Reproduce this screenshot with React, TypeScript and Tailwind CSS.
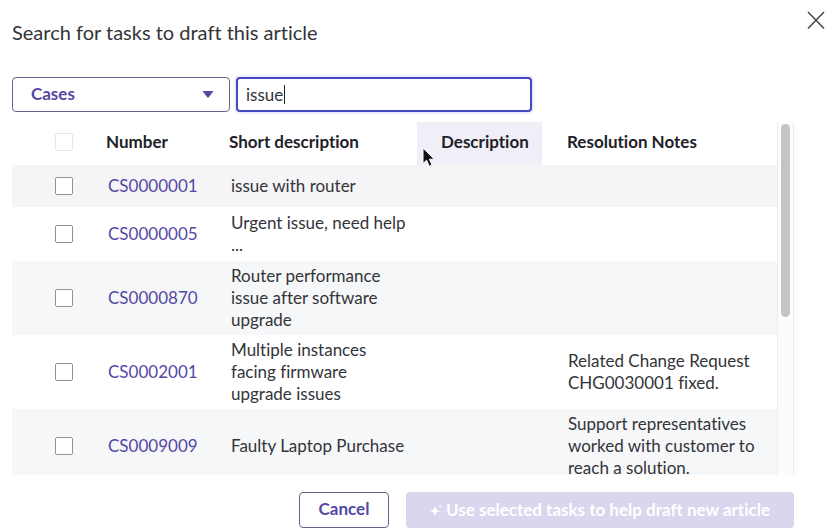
import { useState } from "react";

type Task = {
  id: string;
  summary: string;
  notes: string;
  row: string;
};

const tasks: Task[] = [
  { id: "CS0000001", summary: "issue with router", notes: "", row: "h-[42px] bg-[#f5f5f8]" },
  { id: "CS0000005", summary: "Urgent issue, need help ...", notes: "", row: "h-[54px] bg-white" },
  { id: "CS0000870", summary: "Router performance issue after software upgrade", notes: "", row: "h-[74px] bg-[#f6f7f8]" },
  {
    id: "CS0002001",
    summary: "Multiple instances facing firmware upgrade issues",
    notes: "Related Change Request CHG0030001 fixed.",
    row: "h-[74px] bg-white",
  },
  {
    id: "CS0009009",
    summary: "Faulty Laptop Purchase",
    notes: "Support representatives worked with customer to reach a solution.",
    row: "h-[74px] bg-[#f6f7f8]",
  },
];

function CheckBox({ label, muted = false }: { label: string; muted?: boolean }) {
  return (
    <input
      type="checkbox"
      aria-label={label}
      className={
        "mx-auto block size-[18px] appearance-none rounded-xs border bg-white checked:bg-[#4f46a8] " +
        (muted ? "border-[#e4e4e6]" : "border-[#929292]")
      }
    />
  );
}

function Sparkle() {
  return (
    <svg viewBox="0 0 12 14" className="h-3.5 w-3 shrink-0" fill="currentColor" aria-hidden="true">
      <path d="M5 3 L6.5 6.5 L10 8 L6.5 9.5 L5 13 L3.5 9.5 L0 8 L3.5 6.5 Z" />
      <path d="M10 1.8 L10.5 3.1 L11.8 3.6 L10.5 4.1 L10 5.4 L9.5 4.1 L8.2 3.6 L9.5 3.1 Z" />
    </svg>
  );
}

export default function App() {
  const [query, setQuery] = useState("issue");

  return (
    <main
      role="dialog"
      aria-labelledby="title"
      className="flex h-screen flex-col bg-white pl-3 font-['Lato',sans-serif] text-[17px] leading-[22px] text-[#333438] [font-variant-ligatures:none]"
    >
      <header className="flex h-[77px] shrink-0 justify-between pr-1">
        <h1 id="title" className="pt-5 text-xl leading-6">
          Search for tasks to draft this article
        </h1>
        <button type="button" aria-label="Close" className="mt-2.5 flex size-5 items-center justify-center text-[#4a4a4c]">
          <svg viewBox="0 0 20 20" className="size-5" fill="none" stroke="currentColor" strokeWidth="1.6" aria-hidden="true">
            <path d="M2 2 L18 18.5 M18 2 L2 18.5" />
          </svg>
        </button>
      </header>

      <div className="flex h-[35px] shrink-0 gap-1.5">
        <div className="relative w-[218px]">
          <select
            aria-label="Task type"
            className="h-full w-full appearance-none rounded-sm border border-[#68648f] bg-white pb-0.5 pl-[18px] font-bold text-[#5448a5]"
          >
            <option>Cases</option>
          </select>
          <svg viewBox="0 0 12 7" className="pointer-events-none absolute top-[14px] right-4 h-[7px] w-3" fill="#5448a5" aria-hidden="true">
            <path d="M0.5 0 H11.5 L6.8 6.2 Q6 7 5.2 6.2 Z" />
          </svg>
        </div>
        <div className="relative w-[296px]">
          <input
            type="text"
            aria-label="Search tasks"
            value={query}
            onChange={(e) => setQuery(e.target.value)}
            className="h-full w-full rounded-sm border-2 border-[#4349c0] bg-white pl-2 shadow-[0_0_3px_1px_#dcdcf8] outline-none"
          />
          <span className="absolute top-2 left-12 h-[19px] w-px bg-[#222]" aria-hidden="true" />
        </div>
      </div>

      <div className="mt-2.5 mr-9 flex min-h-0 flex-1">
        <div className="min-w-0 flex-1 overflow-hidden">
          <table className="w-full table-fixed border-collapse text-left">
            <thead>
              <tr className="h-[43px] text-[#202126]">
                <th className="w-[84px] pb-1 pl-5">
                  <CheckBox label="Select all" muted />
                </th>
                <th className="w-[121px] pb-1 pl-2.5">Number</th>
                <th className="w-[200px] pb-1 pl-3">Short description</th>
                <th className="relative w-[125px] bg-[#f0eff7] pb-1 pl-6">
                  Description
                  <svg viewBox="0 0 14 21" className="absolute top-[25px] left-[5px] h-[21px] w-3.5" aria-hidden="true">
                    <path
                      d="M1 1 V16.5 L4.6 13.2 L7.2 19.2 L10 18 L7.4 12.2 H12.3 Z"
                      fill="#111"
                      stroke="#fff"
                      strokeWidth="1"
                      strokeLinejoin="round"
                    />
                  </svg>
                </th>
                <th className="pb-1 pl-[25px]">Resolution Notes</th>
              </tr>
            </thead>
            <tbody>
              {tasks.map((task) => (
                <tr key={task.id} className={task.row}>
                  <td className="pl-5">
                    <CheckBox label={"Select " + task.id} />
                  </td>
                  <td className="pl-3">
                    <a href="#" className="text-[#5448a5]">
                      {task.id}
                    </a>
                  </td>
                  <td className="pr-2 pl-3.5">{task.summary}</td>
                  <td />
                  <td className="pr-3 pl-[26px]">{task.notes}</td>
                </tr>
              ))}
            </tbody>
          </table>
        </div>
        <div className="w-[17px] border-x border-[#ececee] bg-[#fcfcfc] pt-0.5" aria-hidden="true">
          <div className="mx-auto h-[55%] w-[9px] rounded-full bg-[#c4c4c5]" />
        </div>
      </div>

      <footer className="mt-[17px] mr-9 mb-1 flex h-9 shrink-0 justify-end gap-[17px] font-bold">
        <button type="button" className="w-[90px] rounded-sm border border-[#68648f] pb-0.5 text-[#5448a5]">
          Cancel
        </button>
        <button type="button" disabled className="flex w-[388px] items-center justify-center gap-1 rounded-sm bg-[#d9d6ee] text-white">
          <Sparkle />
          Use selected tasks to help draft new article
        </button>
      </footer>
    </main>
  );
}
